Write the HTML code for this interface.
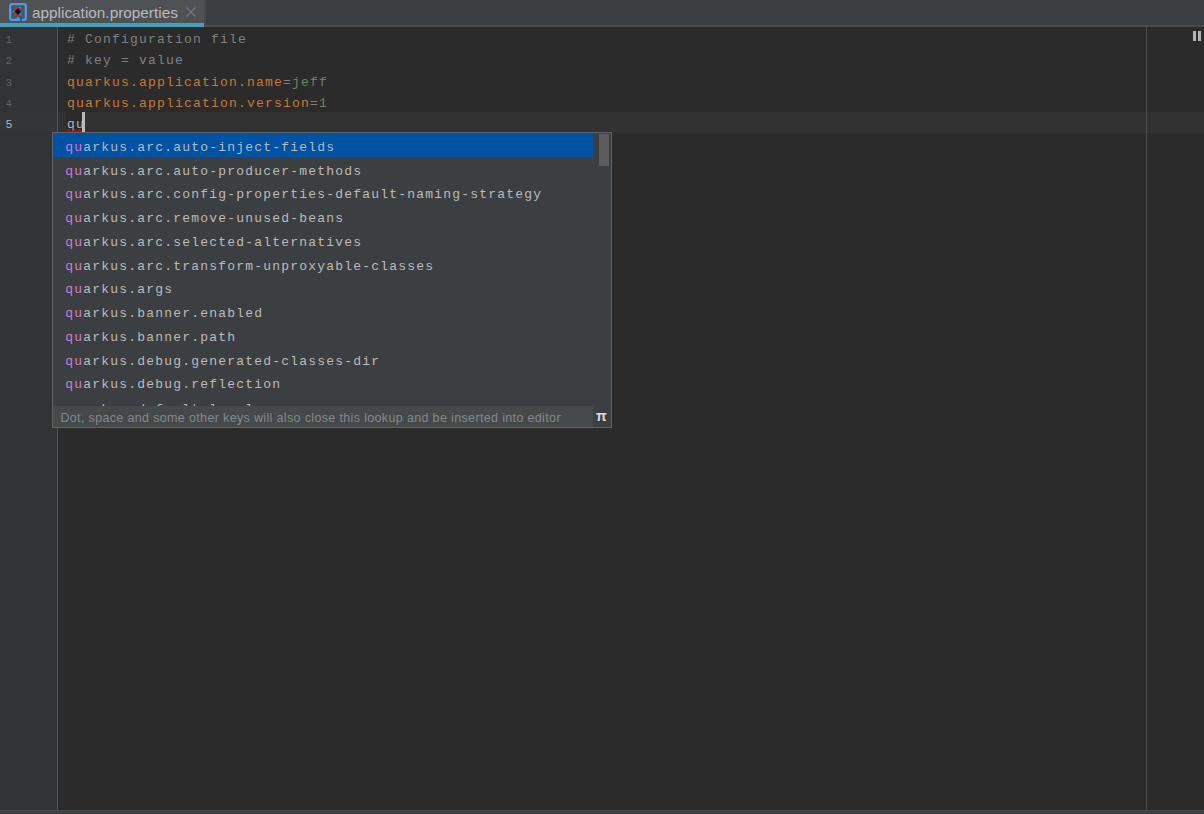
<!DOCTYPE html>
<html><head><meta charset="utf-8"><title>application.properties</title>
<style>
html,body{margin:0;padding:0;}
body{width:1204px;height:814px;overflow:hidden;background:#2b2b2b;position:relative;font-family:"Liberation Sans",sans-serif;}
.abs{position:absolute;}
.mono{font-family:"Liberation Mono",monospace;font-size:13px;letter-spacing:1.2px;white-space:pre;height:20px;line-height:20px;}
#tabbar{left:0;top:0;width:1204px;height:26px;background:#3c3f41;}
#tabline{left:0;top:25px;width:1204px;height:2px;background:#4b4b4b;}
#tab{left:0;top:0;width:204px;height:27px;background:#4e5254;}
#tabsep{left:204px;top:0;width:2px;height:26px;background:#46494b;}
#tabul{left:0;top:23px;width:204px;height:4px;background:#43a1be;}
#tabtxt{left:32px;top:2.5px;font-size:15.35px;line-height:19px;color:#bbbbbb;white-space:pre;}
#gutter{left:0;top:27px;width:57px;height:783px;background:#313335;}
#gline{left:57px;top:27px;width:1px;height:783px;background:#555555;}
#rmargin{left:1146px;top:27px;width:1px;height:783px;background:#4d4d4d;}
#curline{left:58px;top:112px;width:1146px;height:21px;background:#323232;}
#curgut{left:0;top:112px;width:57px;height:21px;background:#333536;}
.ln{left:5.6px;font-family:"Liberation Mono",monospace;font-size:10.8px;line-height:20px;height:20px;color:#606366;}
.cl{left:66.9px;}
.c{color:#808080}.k{color:#cc7832}.v{color:#6a8759}
#bottom{left:0;top:810px;width:1204px;height:4px;background:#3c3f41;border-top:1px solid #4b4b4b;box-sizing:border-box;}
#popup{left:52px;top:132px;width:560px;height:296px;background:#3c3f41;border:1px solid #606263;box-sizing:border-box;overflow:hidden;}
.row{left:12.2px;color:#bbbbbb;}
.row b{font-weight:normal;color:#d17ad6;}
#sel{left:0;top:0;width:540px;height:24px;background:#0052a4;}
#thumb{left:546px;top:1px;width:10px;height:32px;background:#5b5c5d;}
#hint{left:0;top:273px;width:540px;height:21px;background:#45494a;}
#hinttxt{left:7.4px;top:275.4px;color:#84888a;font-size:12.5px;line-height:21px;height:21px;white-space:pre;letter-spacing:0.35px;}
#pi{left:543px;top:273.5px;color:#dddddd;font-size:14px;line-height:18px;font-weight:bold;}
</style></head><body>
<div id="tabbar" class="abs"></div>
<div id="tabline" class="abs"></div>
<div id="tab" class="abs"></div>
<div id="tabsep" class="abs"></div>
<div id="tabul" class="abs"></div>
<svg class="abs" style="left:9px;top:3px" width="18" height="18" viewBox="0 0 18 18">
<path d="M12.9 16.800H15.200a1.600 1.600 0 0 0 1.600-1.600V2.800a1.600 1.600 0 0 0-1.600-1.600H2.800a1.600 1.600 0 0 0-1.600 1.600V15.200a1.600 1.600 0 0 0 1.600 1.600H11.200" fill="none" stroke="#4a9bf2" stroke-width="2.3"/>
<path d="M7.100 16.200l1.700-2.600 2.200 2.600z" fill="#4a9bf2"/>
<path d="M5.900 3.100l3 1.400-2.300 2.600zM14.900 8.400l-2.800 1.700 0-3.400zM5.600 12.900l3-1.400-2.300-2.600z" fill="#ff0a4e"/>
<path d="M11.900 3.400l-2.300 0.800 1.700 1.700zM3.300 8.400l2.200-1.100 0 2.200zM12.700 12.500l-2.400-0.600 1.600-1.700z" fill="#4a9bf2"/>
<path d="M8.800 5.400l2.700 3L8.800 11.400 6.100 8.400z" fill="#0a1216" stroke="#0a1216" stroke-width="0.8" stroke-linejoin="round"/>
</svg>
<div id="tabtxt" class="abs">application.properties</div>
<svg class="abs" style="left:185px;top:6px" width="12" height="12" viewBox="0 0 12 12"><path d="M1.5 1.500l9 9M10.500 1.500l-9 9" stroke="#74787a" stroke-width="1.15" fill="none"/></svg>
<div id="gutter" class="abs"></div>
<div id="gline" class="abs"></div>
<div id="curgut" class="abs"></div>
<div id="curline" class="abs"></div>
<div id="rmargin" class="abs"></div>

<div class="abs ln" style="top:30.13px">1</div>
<div class="abs ln" style="top:51.13px">2</div>
<div class="abs ln" style="top:73.13px">3</div>
<div class="abs ln" style="top:94.13px">4</div>
<div class="abs ln" style="top:114.02px;color:#b4b4b4;font-family:'Liberation Sans',sans-serif;font-size:11.5px;left:5.8px">5</div>
<div class="abs mono cl" style="top:29.54px"><span class="c"># Configuration file</span></div>
<div class="abs mono cl" style="top:50.54px"><span class="c"># key = value</span></div>
<div class="abs mono cl" style="top:72.54px"><span class="k">quarkus.application.name</span><span class="c">=</span><span class="v">jeff</span></div>
<div class="abs mono cl" style="top:93.54px"><span class="k">quarkus.application.version</span><span class="c">=</span><span class="v">1</span></div>
<div class="abs" style="left:66px;top:112px;width:16px;height:21px;background:#2b2b2b"></div>
<div class="abs mono cl" style="top:114.54px;color:#a9b7c6">qu</div>
<svg class="abs" style="left:66px;top:128.600px" width="16" height="4" viewBox="0 0 16 4"><path d="M0 3.700L2.200 0.800L5.100 3.700L8.100 0.800L10.800 3.700L13.500 0.800L16 3.500" stroke="#f00000" stroke-width="1.050" fill="none"/></svg>
<div class="abs" style="left:82px;top:112px;width:3px;height:21px;background:#bbbbbb"></div>
<div class="abs" style="left:1193px;top:31px;width:3px;height:10px;background:#b4b4b4"></div>
<div class="abs" style="left:1198px;top:31px;width:3px;height:10px;background:#b4b4b4"></div>
<div id="bottom" class="abs"></div>
<div id="popup" class="abs">
<div id="sel" class="abs"></div>
<div class="abs mono row" style="top:4.54px"><b>qu</b>arkus.arc.auto-inject-fields</div>
<div class="abs mono row" style="top:28.54px"><b>qu</b>arkus.arc.auto-producer-methods</div>
<div class="abs mono row" style="top:51.54px"><b>qu</b>arkus.arc.config-properties-default-naming-strategy</div>
<div class="abs mono row" style="top:75.54px"><b>qu</b>arkus.arc.remove-unused-beans</div>
<div class="abs mono row" style="top:99.54px"><b>qu</b>arkus.arc.selected-alternatives</div>
<div class="abs mono row" style="top:123.54px"><b>qu</b>arkus.arc.transform-unproxyable-classes</div>
<div class="abs mono row" style="top:146.54px"><b>qu</b>arkus.args</div>
<div class="abs mono row" style="top:170.54px"><b>qu</b>arkus.banner.enabled</div>
<div class="abs mono row" style="top:194.54px"><b>qu</b>arkus.banner.path</div>
<div class="abs mono row" style="top:218.54px"><b>qu</b>arkus.debug.generated-classes-dir</div>
<div class="abs mono row" style="top:241.54px"><b>qu</b>arkus.debug.reflection</div>
<div class="abs mono row" style="top:267.04px"><b>qu</b>arkus.default-locale</div>
<div id="thumb" class="abs"></div>
<div id="hint" class="abs"></div>
<div id="hinttxt" class="abs">Dot, space and some other keys will also close this lookup and be inserted into editor</div>
<div class="abs" style="left:540px;top:273px;width:18px;height:21px;background:#3c3f41"></div>
<div id="pi" class="abs">π</div>
</div>
</body></html>
